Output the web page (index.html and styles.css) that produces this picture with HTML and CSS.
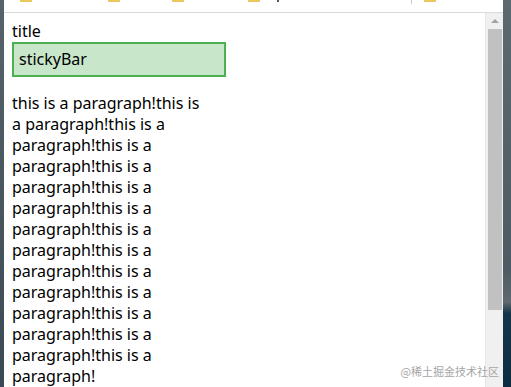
FILE: index.html
```html
<html>
<head>
    <meta charset="utf-8">
    <link rel="stylesheet" href="styles.css">
</head>
<body>
    <div class="screen">
        <div class="desk desk--left"></div>

        <div class="window">
            <div class="bookmarks">
                <div class="bookmark bookmark--first"><span class="folder"></span></div>
                <div class="bookmark bookmark--second"><span class="folder"></span></div>
                <div class="bookmark bookmark--third"><span class="folder"></span></div>
                <div class="bookmark bookmark--fourth"><span class="folder"></span><span class="bookmark__tail"></span></div>
                <div class="bookmarks__sep"></div>
                <div class="bookmark"><span class="folder"></span></div>
            </div>

            <div class="viewport">
                <div class="page">
                    <div class="title">title</div>
                    <div class="sticky-bar">stickyBar</div>
                    <p class="paragraph">this is a paragraph!this is a paragraph!this is a paragraph!this is a paragraph!this is a paragraph!this is a paragraph!this is a paragraph!this is a paragraph!this is a paragraph!this is a paragraph!this is a paragraph!this is a paragraph!this is a paragraph!this is a paragraph!</p>
                </div>

                <div class="scrollbar">
                    <div class="scrollbar__up"></div>
                    <div class="scrollbar__thumb"></div>
                </div>
            </div>
        </div>

        <div class="desk desk--right"></div>

        <div class="watermark">@稀土掘金技术社区</div>
    </div>
</body>
</html>
```
FILE: styles.css
```css
body {
    margin: 0;
    padding: 0;
}
.screen {
    display: flex;
    height: 387px;
    overflow: hidden;
    position: relative;
    width: 511px;
}

/* desktop wallpaper peeking out at the sides */
.desk {
    flex: none;
}
.desk--left {
    background: linear-gradient(#56636b, #46545c 60%, #3a4a54);
    width: 4px;
}
.desk--right {
    background: linear-gradient(#5b6970, #4d5c64 70%, #5f6a70 78%, #15354a 81%, #0e2c40);
    width: 8px;
}

.window {
    background: #fff;
    display: flex;
    flex: 1;
    flex-direction: column;
}

/* bookmarks bar, cut off at the top */
.bookmarks {
    border-bottom: 1px solid #dadada;
    display: flex;
    flex: none;
    height: 12px;
    padding-left: 16px;
}
.bookmark {
    display: flex;
    width: 64px;
}
.bookmark--first {
    width: 88px;
}
.bookmark--third {
    width: 76px;
}
.bookmark--fourth {
    width: 163px;
}
.folder {
    background: #e9c95e;
    display: block;
    height: 2px;
    width: 12px;
}
.bookmark__tail {
    background: #555;
    display: block;
    height: 2px;
    margin-left: 17px;
    width: 2px;
}
.bookmarks__sep {
    background: #c8c8c8;
    height: 4px;
    margin-right: 12px;
    width: 1px;
}

.viewport {
    display: flex;
    flex: 1;
    min-height: 0;
}
.page {
    color: #000;
    flex: 1;
    font-family: "Noto Sans", sans-serif;
    font-size: 16px;
    line-height: 21px;
    overflow: hidden;
    padding: 8px;
}
.title {
    margin: 0;
}
.sticky-bar {
    background: #c8e6c9;
    border: 2px solid #4caf50;
    padding: 5px;
    width: 200px;
}
.paragraph {
    margin: 16px 0 0;
    width: 196px;
}

.scrollbar {
    background: #f0f0f0;
    border-left: 1px solid #e8e8e8;
    display: flex;
    flex: none;
    flex-direction: column;
    padding: 0 1px 0 2px;
    width: 14px;
}
.scrollbar__up {
    border-bottom: 4px solid #a3a3a3;
    border-left: 4px solid transparent;
    border-right: 4px solid transparent;
    height: 0;
    margin: 6px auto 6px;
    width: 0;
}
.scrollbar__thumb {
    background: #c1c1c1;
    height: 281px;
}

.watermark {
    bottom: 9px;
    color: #a6a6a6;
    font-family: "Noto Sans CJK SC", sans-serif;
    font-size: 11px;
    line-height: 14px;
    position: absolute;
    right: 12px;
}
```
